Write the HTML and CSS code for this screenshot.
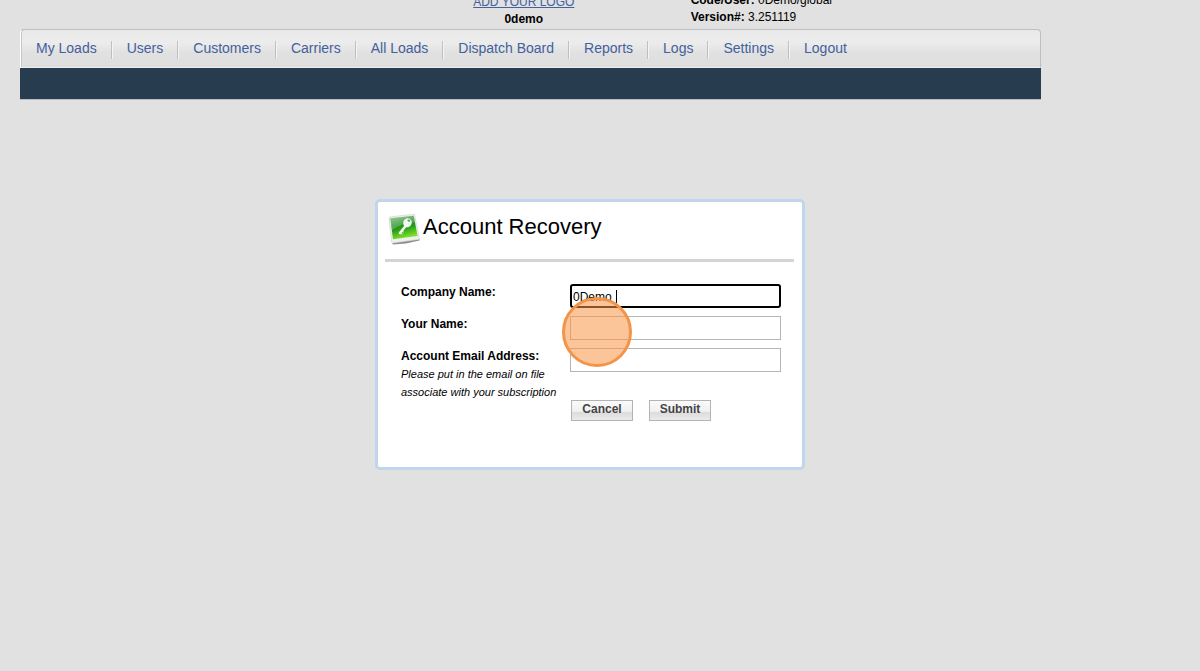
FILE: index.html
```
<!DOCTYPE html>
<html lang="en">
<head>
  <meta charset="UTF-8">
  <meta name="viewport" content="width=device-width, initial-scale=1.0">
  <title>Account Recovery</title>
  <link rel="stylesheet" href="styles.css">
</head>
<body>
  <div class="wrapper">
    <header class="top">
      <div class="logo">
        <a href="#">ADD YOUR LOGO</a>
        <strong>0demo</strong>
      </div>
      <div class="info">
        <div><strong>Code/User:</strong> 0Demo/global</div>
        <div><strong>Version#:</strong> 3.251119</div>
      </div>
    </header>

    <nav class="menu">
      <ul>
        <li><a href="#">My Loads</a></li>
        <li><a href="#">Users</a></li>
        <li><a href="#">Customers</a></li>
        <li><a href="#">Carriers</a></li>
        <li><a href="#">All Loads</a></li>
        <li><a href="#">Dispatch Board</a></li>
        <li><a href="#">Reports</a></li>
        <li><a href="#">Logs</a></li>
        <li><a href="#">Settings</a></li>
        <li><a href="#">Logout</a></li>
      </ul>
    </nav>
    <div class="submenu"></div>
  </div>

  <main>
    <form class="recovery">
      <div class="recovery-title">
        <svg width="32" height="32" viewBox="0 0 32 32" aria-hidden="true">
          <defs>
            <linearGradient id="green" x1="0" y1="0" x2="0.3" y2="1">
              <stop offset="0" stop-color="#7fbf7c"/>
              <stop offset="0.4" stop-color="#2f9430"/>
              <stop offset="0.6" stop-color="#229a14"/>
              <stop offset="1" stop-color="#7fe02c"/>
            </linearGradient>
          </defs>
          <path d="M4 29.500L31.500 26v1.500L18 30.500 5 31.500z" fill="#8f8f8f"/>
          <path d="M1 5Q1 4 2 3.900L25.500 1.300q1 0 1.200 1L31.300 25q.2 1.200-1 1.400L5 30q-1.200.2-1.400-1z" fill="#eef1ed" stroke="#c9cfc7" stroke-width=".6"/>
          <path d="M2.300 5.300L25.700 2.800 29.600 23 5 26.300z" fill="url(#green)"/>
          <path d="M2.300 5.300L25.700 2.800 26.800 9Q13 10 4 17z" fill="#fff" opacity=".22"/>
          <path d="M12 20L18 12.500" stroke="#f2f7f0" stroke-width="2.600" stroke-linecap="round"/>
          <path d="M12.500 20.500l2 .6M14 18.400l1.800.6" stroke="#f2f7f0" stroke-width="1"/>
          <ellipse cx="19.500" cy="9.800" rx="4.200" ry="4.600" transform="rotate(25 19.500 9.800)" fill="#f2f7f0"/>
          <ellipse cx="20.800" cy="7.600" rx="1.500" ry="1" transform="rotate(25 20.800 7.600)" fill="#4fa04c"/>
        </svg>
        <h1>Account Recovery</h1>
      </div>

      <div class="fields">
        <label for="company">Company Name:</label>
        <div class="field">
          <input type="text" id="company" class="active" value="0Demo ">
          <span class="caret"></span>
        </div>

        <label for="name">Your Name:</label>
        <div class="field">
          <input type="text" id="name">
        </div>

        <label for="email">Account Email Address:
          <em>Please put in the email on file associate with your subscription</em>
        </label>
        <div class="field">
          <input type="text" id="email">
          <div class="buttons">
            <button type="button">Cancel</button>
            <button type="submit">Submit</button>
          </div>
        </div>
      </div>

      <!-- Click marker -->
      <span class="marker"></span>
    </form>
  </main>
</body>
</html>
```
FILE: styles.css
```
body {
  margin: 0;
  background: #e1e1e1;
  color: #000;
  font-family: Arial, "Liberation Sans", sans-serif;
  font-size: 12px;
  line-height: 17px;
}

.wrapper {
  margin: 0 159px 0 20px;
}

/* Top strip */
.top {
  display: flex;
  align-items: flex-end;
  height: 29px;
  padding-left: 33%;
}

.logo {
  display: flex;
  flex-direction: column;
  align-items: center;
  flex: 20 1 0;
  padding-bottom: 1px;
}

.logo a {
  color: #43619b;
}

.info {
  flex: 21 1 0;
  padding-bottom: 3px;
}

/* Menu */
.menu {
  box-sizing: border-box;
  height: 39px;
  border: 1px solid #b9bfc3;
  border-left-color: #fff;
  border-bottom-color: #eee;
  border-radius: 4px 4px 0 0;
  box-shadow: inset 1px 0 #c4c8ca;
  background: linear-gradient(#e9e9e9, #ececec 35%, #e1e1e1 60%, #dedede);
}

.menu ul {
  display: flex;
  margin: 0;
  padding: 11px 0 0;
  list-style: none;
}

.menu li {
  height: 18px;
  padding: 0 14px;
  border-right: 1px solid #bfbfbf;
  border-left: 1px solid #f4f4f4;
  font-size: 14px;
  line-height: 15px;
}

.menu li:first-child {
  border-left-color: transparent;
}

.menu li:last-child {
  border-right: 0;
}

.menu a {
  display: block;
  color: #43619b;
  text-decoration: none;
}

.submenu {
  height: 31px;
  background: #283c50;
  border-bottom: 1px solid #b8bcc2;
}

/* Recovery box */
main {
  display: flex;
  justify-content: center;
  padding: 99px 20px 20px 0;
}

.recovery {
  position: relative;
  box-sizing: border-box;
  width: 430px;
  padding: 8px 8px 46px 7px;
  background: #fff;
  border: 3px solid #bfd6ec;
  border-radius: 5px;
}

.recovery-title {
  display: flex;
  gap: 3px;
  padding: 3px 3px 14px;
  border-bottom: 3px solid #d6d3d1;
}

.recovery-title h1 {
  margin: 0;
  font-size: 22px;
  font-weight: normal;
  line-height: 28px;
}

.fields {
  display: grid;
  grid-template-columns: 169px 1fr;
  row-gap: 8px;
  padding: 22px 13px 0 16px;
}

.fields label {
  font-weight: bold;
}

.fields em {
  display: block;
  font-size: 11px;
  font-weight: normal;
  line-height: 18px;
}

.field {
  position: relative;
}

.field input {
  display: block;
  box-sizing: border-box;
  width: 100%;
  height: 24px;
  padding: 1px 1px 0;
  border: 1px solid #b5b5b5;
  background: #fff;
  font-family: inherit;
  font-size: 12px;
}

.field input.active {
  border: 2px solid #000;
  border-radius: 3px;
  outline: none;
}

.caret {
  position: absolute;
  left: 46px;
  top: 6px;
  width: 1px;
  height: 13px;
  background: #000;
}

.buttons {
  display: flex;
  gap: 16px;
  padding: 28px 1px 0;
}

.buttons button {
  width: 62px;
  height: 21px;
  padding: 0 0 3px;
  border: 1px solid #b3b3b3;
  background: linear-gradient(#fafafa, #f0f0f0 55%, #dcdcdc 60%, #eaeaea);
  color: #444;
  font-family: inherit;
  font-size: 12px;
  font-weight: bold;
}

.marker {
  position: absolute;
  left: 184px;
  top: 95px;
  box-sizing: border-box;
  width: 70px;
  height: 70px;
  border: 3px solid #f39448;
  border-radius: 50%;
  background: rgba(250, 150, 70, 0.55);
  pointer-events: none;
}
```
